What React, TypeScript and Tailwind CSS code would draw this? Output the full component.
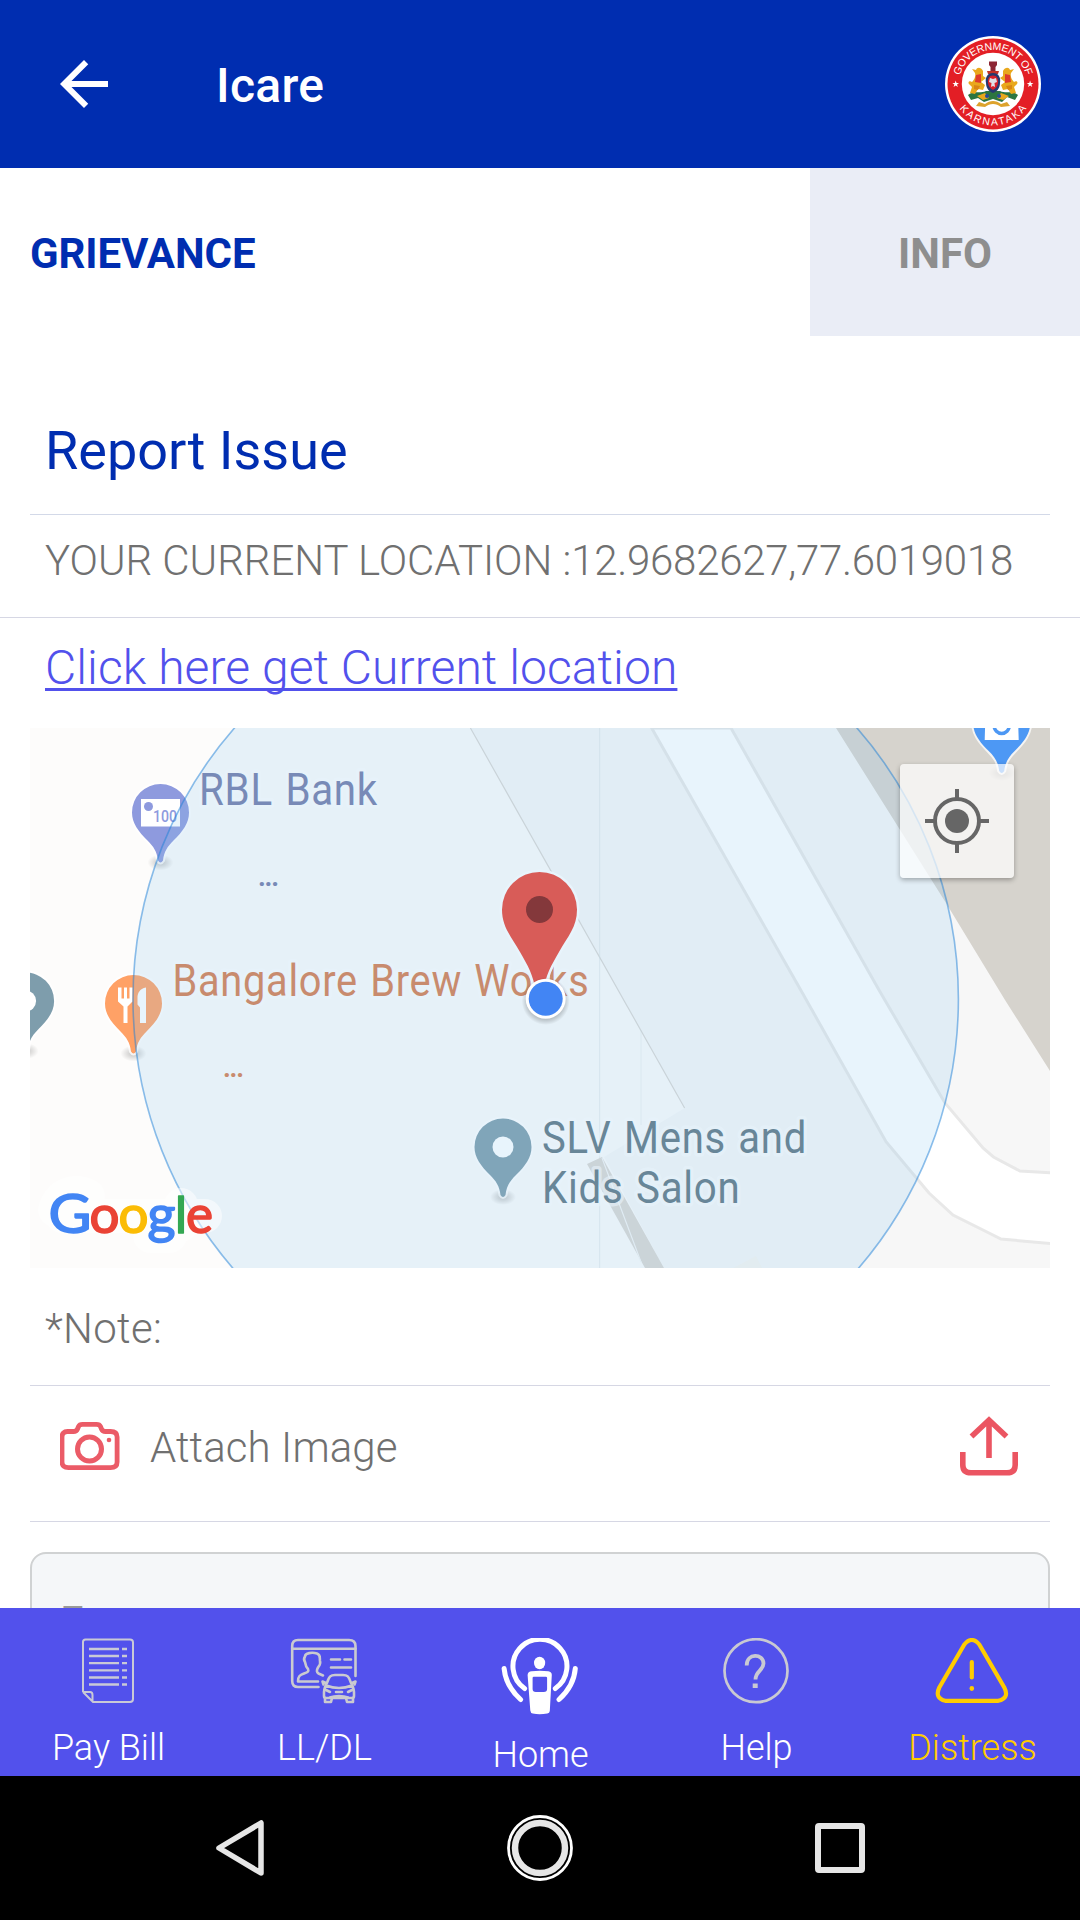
import { useState } from 'react';

// Outline of a place pin whose head is centred on 0,0
const PIN_PATH = 'M0 -28.5 A28.5 28.5 0 0 1 28.5 0 C28.5 11 22 19 13 28 C7 34 3.5 39 2.5 48 Q0 52 -2.5 48 C-3.5 39 -7 34 -13 28 C-22 19 -28.5 11 -28.5 0 A28.5 28.5 0 0 1 0 -28.5Z';

interface PinProps {
  x: number;
  y: number;
  color: string;
  children?: React.ReactNode;
}

function Pin({ x, y, color, children }: PinProps) {
  return (
    <g transform={`translate(${x} ${y})`}>
      <ellipse cx="0" cy="50" rx="13" ry="8" fill="url(#pinShadow)" />
      <path d={PIN_PATH} fill={color} stroke="#fff" strokeOpacity="0.75" strokeWidth="4" paintOrder="stroke" />
      {children}
    </g>
  );
}

interface MapLabelProps {
  x: number;
  y: number;
  width: number;
  color: string;
  text: string;
}

function MapLabel({ x, y, width, color, text }: MapLabelProps) {
  return (
    <text
      x={x}
      y={y}
      textLength={width}
      lengthAdjust="spacingAndGlyphs"
      fontSize="44"
      letterSpacing="0.8"
      wordSpacing="2"
      fill={color}
      stroke="#fff"
      strokeOpacity="0.6"
      strokeWidth="7"
      strokeLinejoin="round"
      paintOrder="stroke"
    >
      {text}
    </text>
  );
}

// Second line of a label that has been shortened
function MapEllipsis({ x, y, color }: { x: number; y: number; color: string }) {
  return (
    <text x={x} y={y} textLength="21" fontSize="27" fontWeight="700" fill={color}>
      ...
    </text>
  );
}

const googleLetters = [
  { letter: 'G', x: 48.5, width: 43, size: 54, color: '#4285f4' },
  { letter: 'o', x: 89.5, width: 30, size: 52, color: '#ea4335' },
  { letter: 'o', x: 118.5, width: 30, size: 52, color: '#fbbc05' },
  { letter: 'g', x: 147.5, width: 28, size: 52, color: '#4285f4' },
  { letter: 'l', x: 175, width: 12, size: 50, color: '#34a853' },
  { letter: 'e', x: 186, width: 27, size: 52, color: '#ea4335' },
];

function GoogleMark() {
  return (
    <g fontFamily="Lato, sans-serif" strokeLinejoin="round" paintOrder="stroke">
      <path d="M55 1210 a22 22 0 0 1 33 -14 M62 1216 H205 M150 1236 H170 M181 1205 V1225" stroke="#fff" strokeOpacity="0.5" strokeWidth="34" strokeLinecap="round" fill="none" />
      {googleLetters.map((item, i) => (
        <text
          key={i}
          x={item.x}
          y="1233"
          fontSize={item.size}
          textLength={item.width}
          lengthAdjust="spacingAndGlyphs"
          fill={item.color}
          stroke={item.color}
          strokeWidth="1.6"
        >
          {item.letter}
        </text>
      ))}
    </g>
  );
}

function Lion() {
  return (
    <g>
      <path d="M38 35 C36 31 32 31 31 34 L27 33 L30 37 C31 41 29 44 27 46 C24 44 22 47 25 49 L27 51 L25 57 L30 58 L33 53 L38 54 L40 49 L36 46 L41 42 L38 40Z" fill="#e9a81c" />
      <path d="M31 39 L36 38 L36 47 L30 46Z" fill="#dd3a2c" />
      <path d="M29 49 L35 50 L33 54 L29 53Z" fill="#d98514" />
    </g>
  );
}

function Emblem() {
  return (
    <svg className="h-24 w-24" viewBox="0 0 96 96" fontFamily='"Liberation Sans", sans-serif'>
      <defs>
        <path id="sealTop" d="M13.9 48 A34.1 34.1 0 0 1 82.1 48" />
        <path id="sealBottom" d="M6.5 48 A41.5 41.5 0 0 0 89.5 48" />
      </defs>
      <circle cx="48" cy="48" r="48" fill="#fff" />
      <circle cx="48" cy="48" r="45.5" fill="#e31e25" />
      <circle cx="48" cy="48" r="31.2" fill="#fff" />
      <text fontSize="10.5" fill="#fff">
        <textPath href="#sealTop" startOffset="50%" textAnchor="middle" textLength="90">GOVERNMENT OF</textPath>
      </text>
      <text fontSize="10.5" fill="#fff">
        <textPath href="#sealBottom" startOffset="50%" textAnchor="middle" textLength="78">KARNATAKA</textPath>
      </text>
      <g fill="#fff">
        <path id="sealStar" d="M10.7 44.6 L11.5 47 L14 47 L12 48.6 L12.8 51 L10.7 49.5 L8.6 51 L9.4 48.6 L7.4 47 L9.9 47Z" />
        <use href="#sealStar" x="74.4" />
      </g>
      <path d="M23 59 C29 54 35 58 41 55 H55 C61 58 67 54 73 59 L70 64 L62 61 L57 66 L48 63 L39 66 L33 62 L26 64Z" fill="#2c7540" />
      <path d="M32 60 L40 57 L44 62 L38 64Z M64 60 L56 57 L52 62 L58 64Z" fill="#e9a81c" />
      <circle cx="42" cy="60" r="2" fill="#264b9a" />
      <circle cx="54" cy="60" r="2" fill="#264b9a" />
      <Lion />
      <g transform="translate(96 0) scale(-1 1)">
        <Lion />
      </g>
      <path d="M44 25.5 H52 V29 L50.5 31 V35 H45.5 V31 L44 29Z" fill="#8d2634" />
      <path d="M42 35 H54 L53 38 H43Z" fill="#c33127" />
      <path d="M48 37 C54 37 56 42 55 47 C55 53 51 56 48 57 C45 56 41 53 41 47 C40 42 42 37 48 37Z" fill="#26396f" />
      <path d="M48 39.5 C52 39.5 53.5 43 53 47 C52.5 51 50 53 48 54 C46 53 43.5 51 43 47 C42.5 43 44 39.5 48 39.5Z" fill="#d6202b" />
      <path d="M48 43 L51 42 L52 46 L49.5 47 L50 51 L48 50 L46 51 L46.5 47 L44 46 L45 42Z" fill="#dfdfe6" />
      <path d="M34 66 L40 68 C45 64 51 64 56 68 L62 66 L65 70 L56 71 C51 67 45 67 40 71 L31 70Z" fill="#dda32c" />
    </svg>
  );
}

function LocationMap() {
  return (
    <svg className="h-full w-full" viewBox="30 728 1020 540" fontFamily="Roboto, sans-serif" fontWeight="400">
      <defs>
        <radialGradient id="pinShadow">
          <stop offset="0.3" stopColor="#000" stopOpacity="0.16" />
          <stop offset="1" stopColor="#000" stopOpacity="0" />
        </radialGradient>
        <radialGradient id="dotShadow">
          <stop offset="0.7" stopColor="#000" stopOpacity="0.25" />
          <stop offset="1" stopColor="#000" stopOpacity="0" />
        </radialGradient>
      </defs>

      {/* Land, buildings and road */}
      <rect x="30" y="728" width="1020" height="540" fill="#fdfcfb" />
      <path d="M470.4 728 L684.6 1108 L604 1157 L664 1268 H1050 V728Z" fill="#f7f7f7" />
      <path d="M470.4 728 L684.6 1108" stroke="#d9d6d3" strokeWidth="1.2" />
      <path d="M599.6 728 V1268" stroke="#d5dde0" strokeOpacity="0.45" strokeWidth="1.2" />
      <path d="M641 1030 V1125" stroke="#d5dde0" strokeOpacity="0.25" strokeWidth="1.2" />
      <path d="M587 1164 L602 1157 L664 1268 H645Z" fill="#dbd7d3" />
      <path d="M602 1158 L641 1262" stroke="#f5f5f5" strokeWidth="1.2" />
      <path d="M733 1268 L756 1256 L762 1268Z" fill="#f8f6f1" />
      <path
        d="M651.6 728 L800.7 990 L886 1141.7 L929 1193 L953 1215 L1001 1239 L1055 1244 V1173 L1020 1171 L993.5 1157 L983 1148 L945 1103 L879 990 L731 728Z"
        fill="#fff"
        stroke="#e8e8e8"
        strokeWidth="3"
      />
      <path d="M836 728 L946 903 L1005 1000 L1050 1071 V728Z" fill="#d6d3cd" />

      {/* Places */}
      <Pin x={160.5} y={812.5} color="#8e9ade">
        <rect x="-19.5" y="-13.5" width="39" height="27.5" fill="#fff" />
        <circle cx="-12" cy="-6" r="4.5" fill="#8e9ade" />
        <text x="-7.5" y="9.5" fontSize="17" fontWeight="500" textLength="24" lengthAdjust="spacingAndGlyphs" fill="#8e9ade">100</text>
      </Pin>
      <MapLabel x={199} y={805} width={179} color="#747ba9" text="RBL Bank" />
      <MapEllipsis x={258} y={885.5} color="#747ba9" />

      <Pin x={133.5} y={1003.5} color="#ffa166">
        <path d="M-15.5 -16 V-2 L-10 3 V19.5 H-6 V3 L-1 -2 V-16 H-4 V-5 H-6.5 V-16 H-9.5 V-5 H-12 V-16Z" fill="#fff" />
        <path d="M12.5 -16 C6 -15 4 -10 4 -6 V1 L6.5 4 V19.5 H12.5Z" fill="#fff" />
      </Pin>
      <MapLabel x={172.5} y={996} width={417} color="#d77c4e" text="Bangalore Brew Works" />
      <MapEllipsis x={223} y={1076.5} color="#d77c4e" />

      <Pin x={25.6} y={1001} color="#7e9dac">
        <circle r="10.5" fill="#fff" />
      </Pin>
      <Pin x={503} y={1147} color="#7e9dac">
        <circle r="10.5" fill="#fff" />
      </Pin>
      <MapLabel x={542} y={1153} width={265} color="#5f7683" text="SLV Mens and" />
      <MapLabel x={542} y={1203} width={198.5} color="#5f7683" text="Kids Salon" />

      <Pin x={1001.7} y={723} color="#4d98f4">
        <path d="M-16.5 0 L-17 17 H17 L16.5 0Z" fill="#fff" />
        <circle cy="3" r="7.5" fill="#fff" stroke="#4d98f4" strokeWidth="3.5" />
      </Pin>

      {/* Selected position */}
      <path
        d="M539.5 872 A37.5 37.5 0 0 1 577 909.5 C577 927 568 936 559 952 C551 966 546 974 543 992 H536 C533 974 528 966 520 952 C511 936 502 927 502 909.5 A37.5 37.5 0 0 1 539.5 872Z"
        fill="#ec4233"
        stroke="#fff"
        strokeWidth="5"
        paintOrder="stroke"
      />
      <circle cx="539.5" cy="909.5" r="13.5" fill="#82140e" />
      <circle cx="545.7" cy="999" r="412.7" fill="#8ac6ee" fillOpacity="0.2" stroke="#1e7fd8" strokeOpacity="0.5" strokeWidth="1.6" />
      <circle cx="545.7" cy="1001" r="24" fill="url(#dotShadow)" />
      <circle cx="545.7" cy="998.7" r="20" fill="#fff" />
      <circle cx="545.7" cy="998.7" r="17" fill="#4285f4" />

      <GoogleMark />
    </svg>
  );
}

function PayBillIcon() {
  return (
    <svg className="h-[66px] w-[54px]" viewBox="0 0 54 66" fill="none" stroke="#c9c9d6" strokeWidth="2">
      <path d="M2 54 V4 Q2 1.5 4.5 1.5 H49 Q52 1.5 52 4.5 V61 Q52 64 49 64 H12 L2 54 M2 54 H9 Q11.5 54 11.5 57 V64" />
      <path d="M8 11 H38 M8 18 H38 M8 25.2 H38 M8 32.3 H38 M8 39.5 H38 M8 46.5 H38" strokeWidth="2.3" />
      <path d="M41 11 H46 M41 18 H46 M41 25.2 H46 M41 32.3 H46 M41 39.5 H46 M41 46.5 H46" strokeWidth="2.3" />
    </svg>
  );
}

function LicenceIcon() {
  return (
    <svg className="h-[66px] w-[68px]" viewBox="0 0 68 66" fill="none" stroke="#cacad0" strokeWidth="2.6" strokeLinecap="round" strokeLinejoin="round">
      <path d="M28.5 49 H8 Q2.2 49 2.2 43 V8 Q2.2 2 8 2 H59 Q65.5 2 65.5 8 V38" />
      <path d="M2.2 10.7 H65.5" />
      <path d="M28 43.5 H8 C8 38 10 37 14 35.5 C18 34 19 33.5 18 31 C16 29 15.5 27 15 24 C13.5 22 14 20 15 18.5 C15 15 22 14 27 15.5 C31 17 29.5 20 30 23 C31 26 29 28 28 29.5 C26.5 32 26.5 34.5 28.5 35.5 L33 37.5" />
      <path d="M41 21.5 H50 M54.5 21.5 H61 M41 29.5 H61" />
      <path d="M37 45 C39 38 41 37 45 37 H53 C57 37 59 38 61 45 M36 47.5 C44 50.5 54 50.5 62 47.5 M36.5 46 Q33.5 51 34 58 Q34 60 36 60 H62 Q64 60 64 58 Q64.5 51 61.5 46" />
      <path d="M36 45 L32.5 43.5 L33.5 46.5 M62 45 L65.5 43.5 L64.5 46.5" />
      <path d="M36 52 L40 54 M62 52 L58 54 M46 54 H52 M40 59.5 C45 57.5 53 57.5 58 59.5" />
      <path d="M35 60 V64 H41 L42 60 M63 60 V64 H57 L56 60" />
    </svg>
  );
}

function HomeIcon() {
  return (
    <svg className="h-[78px] w-[78px]" viewBox="0.7 1 78 78" fill="none" stroke="#fff" strokeLinecap="round">
      <path d="M24.3 51.5 A27 27 0 1 1 55 51.5" strokeWidth="5" />
      <path d="M3.8 31.5 C5 44 12 55 20.3 62.5 M75 31.5 C74 44 67 55 58.7 62.5" strokeWidth="5" />
      <ellipse cx="39.3" cy="26" rx="5.6" ry="6.2" fill="#fff" stroke="none" />
      <path fillRule="evenodd" d="M27.3 38 Q27.5 34.5 31.5 34.2 Q39.3 33.5 48 34.2 Q51.5 34.8 51.5 38 L49.5 74 Q49.3 76 47 76.5 Q39 77.8 32.5 76.5 Q30.2 76 30 73.5Z M33.5 39.8 Q32.3 39.8 32.3 41 V52 Q32.3 55 35.5 55 H43.5 Q46.8 55 46.8 52 V41 Q46.8 39.8 45.5 39.8Z" fill="#fff" stroke="none" />
    </svg>
  );
}

function HelpIcon() {
  return (
    <svg className="h-[66px] w-[66px]" viewBox="0 0 66 66" fill="none" stroke="#c9c9d2">
      <circle cx="33" cy="32.7" r="31.5" strokeWidth="2.7" />
      <path d="M23.7 27.5 C23.7 14.5 40.5 15.5 40.5 25.5 C40.5 32.5 32.5 33 32.5 41.5" strokeWidth="3.8" />
      <path d="M32.2 45.5 V50" strokeWidth="5" />
    </svg>
  );
}

function DistressIcon() {
  return (
    <svg className="h-[66px] w-[74px]" viewBox="0.2 0 74 66" fill="none" stroke="#ffcc00" strokeLinecap="round">
      <path d="M29.5 6.5 Q37 -2.5 44.5 6.5 L69.5 49.5 Q75 60 63.5 62.8 H10.5 Q-0.5 60 4.5 49.5Z" strokeWidth="4.2" strokeLinejoin="round" />
      <path d="M37 24 V39.5" strokeWidth="4.2" />
      <path d="M37 50.3 V50.6" strokeWidth="4.6" />
    </svg>
  );
}

const bottomLinks = [
  { name: 'Pay Bill', icon: <PayBillIcon />, style: 'mt-[15px] text-white' },
  { name: 'LL/DL', icon: <LicenceIcon />, style: 'mt-[15px] text-white' },
  { name: 'Home', icon: <HomeIcon />, style: 'mt-[10px] text-white' },
  { name: 'Help', icon: <HelpIcon />, style: 'mt-[15px] text-white' },
  { name: 'Distress', icon: <DistressIcon />, style: 'mt-[15px] text-[#ffcc00]' },
];

export default function App() {
  const [activeTab, setActiveTab] = useState('GRIEVANCE');

  return (
    <div className="flex h-[1920px] w-[1080px] flex-col overflow-hidden bg-white font-[Roboto,sans-serif]">
      {/* Header */}
      <header className="flex h-[168px] shrink-0 items-center bg-[#002db0] pr-[39px] pl-12">
        <svg className="h-[72px] w-[72px]" viewBox="0 0 24 24" fill="#fff">
          <path d="M20 11H7.83l5.59-5.59L12 4l-8 8 8 8 1.41-1.41L7.83 13H20v-2z" />
        </svg>
        <h1 className="ml-24 flex-1 pt-[3px] text-5xl font-medium tracking-[0.3px] text-white">Icare</h1>
        <Emblem />
      </header>

      {/* Tabs */}
      <div className="flex h-[168px] shrink-0 text-[42px] font-bold">
        <button className="w-[810px] pt-[3px] pl-[30px] text-left tracking-[-0.1px] text-[#002db0]" onClick={() => setActiveTab('GRIEVANCE')}>
          GRIEVANCE
        </button>
        <button className="w-[270px] bg-[#eaedf6] pt-[3px] text-[#8e8e8e]" onClick={() => setActiveTab('INFO')}>
          INFO
        </button>
      </div>

      {/* Report form */}
      <main className="h-[1272px] shrink-0 overflow-hidden text-[42px] leading-[50px] font-light text-[#707070]" data-tab={activeTab}>
        <h2 className="mx-[30px] h-[179px] border-b border-[#d3d9e8] pt-[83px] pl-[15px] text-[54px] leading-[64px] font-normal text-[#002db0]">
          Report Issue
        </h2>
        <p className="h-[103px] border-b border-[#d6d7e4] pt-[21px] pl-[45px] tracking-[-0.04px] whitespace-nowrap">
          YOUR CURRENT LOCATION :<span className="tracking-[-0.28px]">12.9682627,77.6019018</span>
        </p>
        <div className="h-[110px] pt-[22px] pl-[45px] text-5xl leading-[56px] tracking-[0.07px] text-[#5251ec]">
          <a className="underline decoration-[3px] underline-offset-[4px] [text-decoration-skip-ink:none]">Click here get Current location</a>
        </div>

        <div className="relative mx-[30px] h-[540px] overflow-hidden">
          <LocationMap />
          <button className="absolute top-9 right-9 flex h-[114px] w-[114px] items-center justify-center rounded bg-white/70 shadow-[0_2px_5px_rgba(0,0,0,0.3)]">
            <svg className="h-[66px] w-[66px]" viewBox="-33 -33 66 66" fill="none" stroke="#666" strokeWidth="4">
              <circle r="22" />
              <circle r="12" fill="#666" stroke="none" />
              <path d="M0 -32 V-23 M0 23 V32 M-32 0 H-23 M23 0 H32" />
            </svg>
          </button>
        </div>

        <p className="mx-[30px] h-[118px] border-b border-[#d6d7e4] pt-9 pl-[15px] tracking-[0.3px]">*Note:</p>

        <div className="mx-[30px] h-[136px] border-b border-[#d6d7e4] pr-8 pl-[30px]">
          <div className="flex h-[120px] items-center">
            <svg className="h-12 w-[60px]" viewBox="0.5 0 60 48" fill="none" stroke="#eb5b67" strokeWidth="4.8">
              <path d="M2.5 15 Q2.5 9.5 8 9.5 H14 Q17 9.5 18 7 L19 4.5 Q20 2.4 23 2.4 H37 Q40 2.4 41 4.5 L42 7 Q43 9.5 46 9.5 H51 Q57.6 9.5 57.6 15 V40 Q57.6 45.6 51 45.6 H9 Q2.5 45.6 2.5 40Z" />
              <circle cx="30" cy="27" r="12" strokeWidth="5" />
              <circle cx="49.5" cy="18" r="2.3" fill="#eb5b67" stroke="none" />
            </svg>
            <span className="flex-1 pt-[3px] pl-[30px] tracking-[0.1px]">Attach Image</span>
            <svg className="h-[60px] w-[58px]" viewBox="0 0 58 60" fill="none" stroke="#eb5562" strokeWidth="5.6">
              <path d="M29 3 V42 M11.5 20.5 L29 4 L46.5 20.5" />
              <path d="M2.8 36 V49 Q2.8 56.8 11 56.8 H47 Q55.2 56.8 55.2 49 V36" />
            </svg>
          </div>
        </div>

        <div className="mx-[30px] mt-[30px] h-[270px] rounded-[16px] border-2 border-[#d0d2d3] bg-[#f5f7f9] pt-[43px] pl-7 font-normal text-[#999]">
          E
        </div>
      </main>

      {/* Bottom links */}
      <nav className="grid h-[168px] shrink-0 grid-cols-5 bg-[#5251ec]">
        {bottomLinks.map((link) => (
          <a key={link.name} className="flex flex-col items-center pt-[30px]">
            {link.icon}
            <span className={`pt-px pl-px text-4xl leading-[56px] font-light ${link.style}`}>{link.name}</span>
          </a>
        ))}
      </nav>

      {/* System keys */}
      <footer className="flex h-36 shrink-0 items-center justify-between bg-black px-[210px]">
        <svg className="h-[60px] w-[60px]" viewBox="0 0 60 60" fill="none" stroke="#e6e6e6" strokeWidth="5.5" strokeLinejoin="round">
          <path d="M51 5 V55 L9 30Z" />
        </svg>
        <svg className="h-[68px] w-[68px]" viewBox="-34 -34 68 68" fill="none">
          <circle r="31.5" stroke="#fff" strokeWidth="2.8" />
          <circle r="25" stroke="#e6e6e6" strokeWidth="6.5" />
        </svg>
        <svg className="h-[60px] w-[60px]" viewBox="0 0 60 60" fill="none" stroke="#e6e6e6" strokeWidth="6">
          <rect x="8" y="8" width="44" height="44" rx="1" />
        </svg>
      </footer>
    </div>
  );
}
